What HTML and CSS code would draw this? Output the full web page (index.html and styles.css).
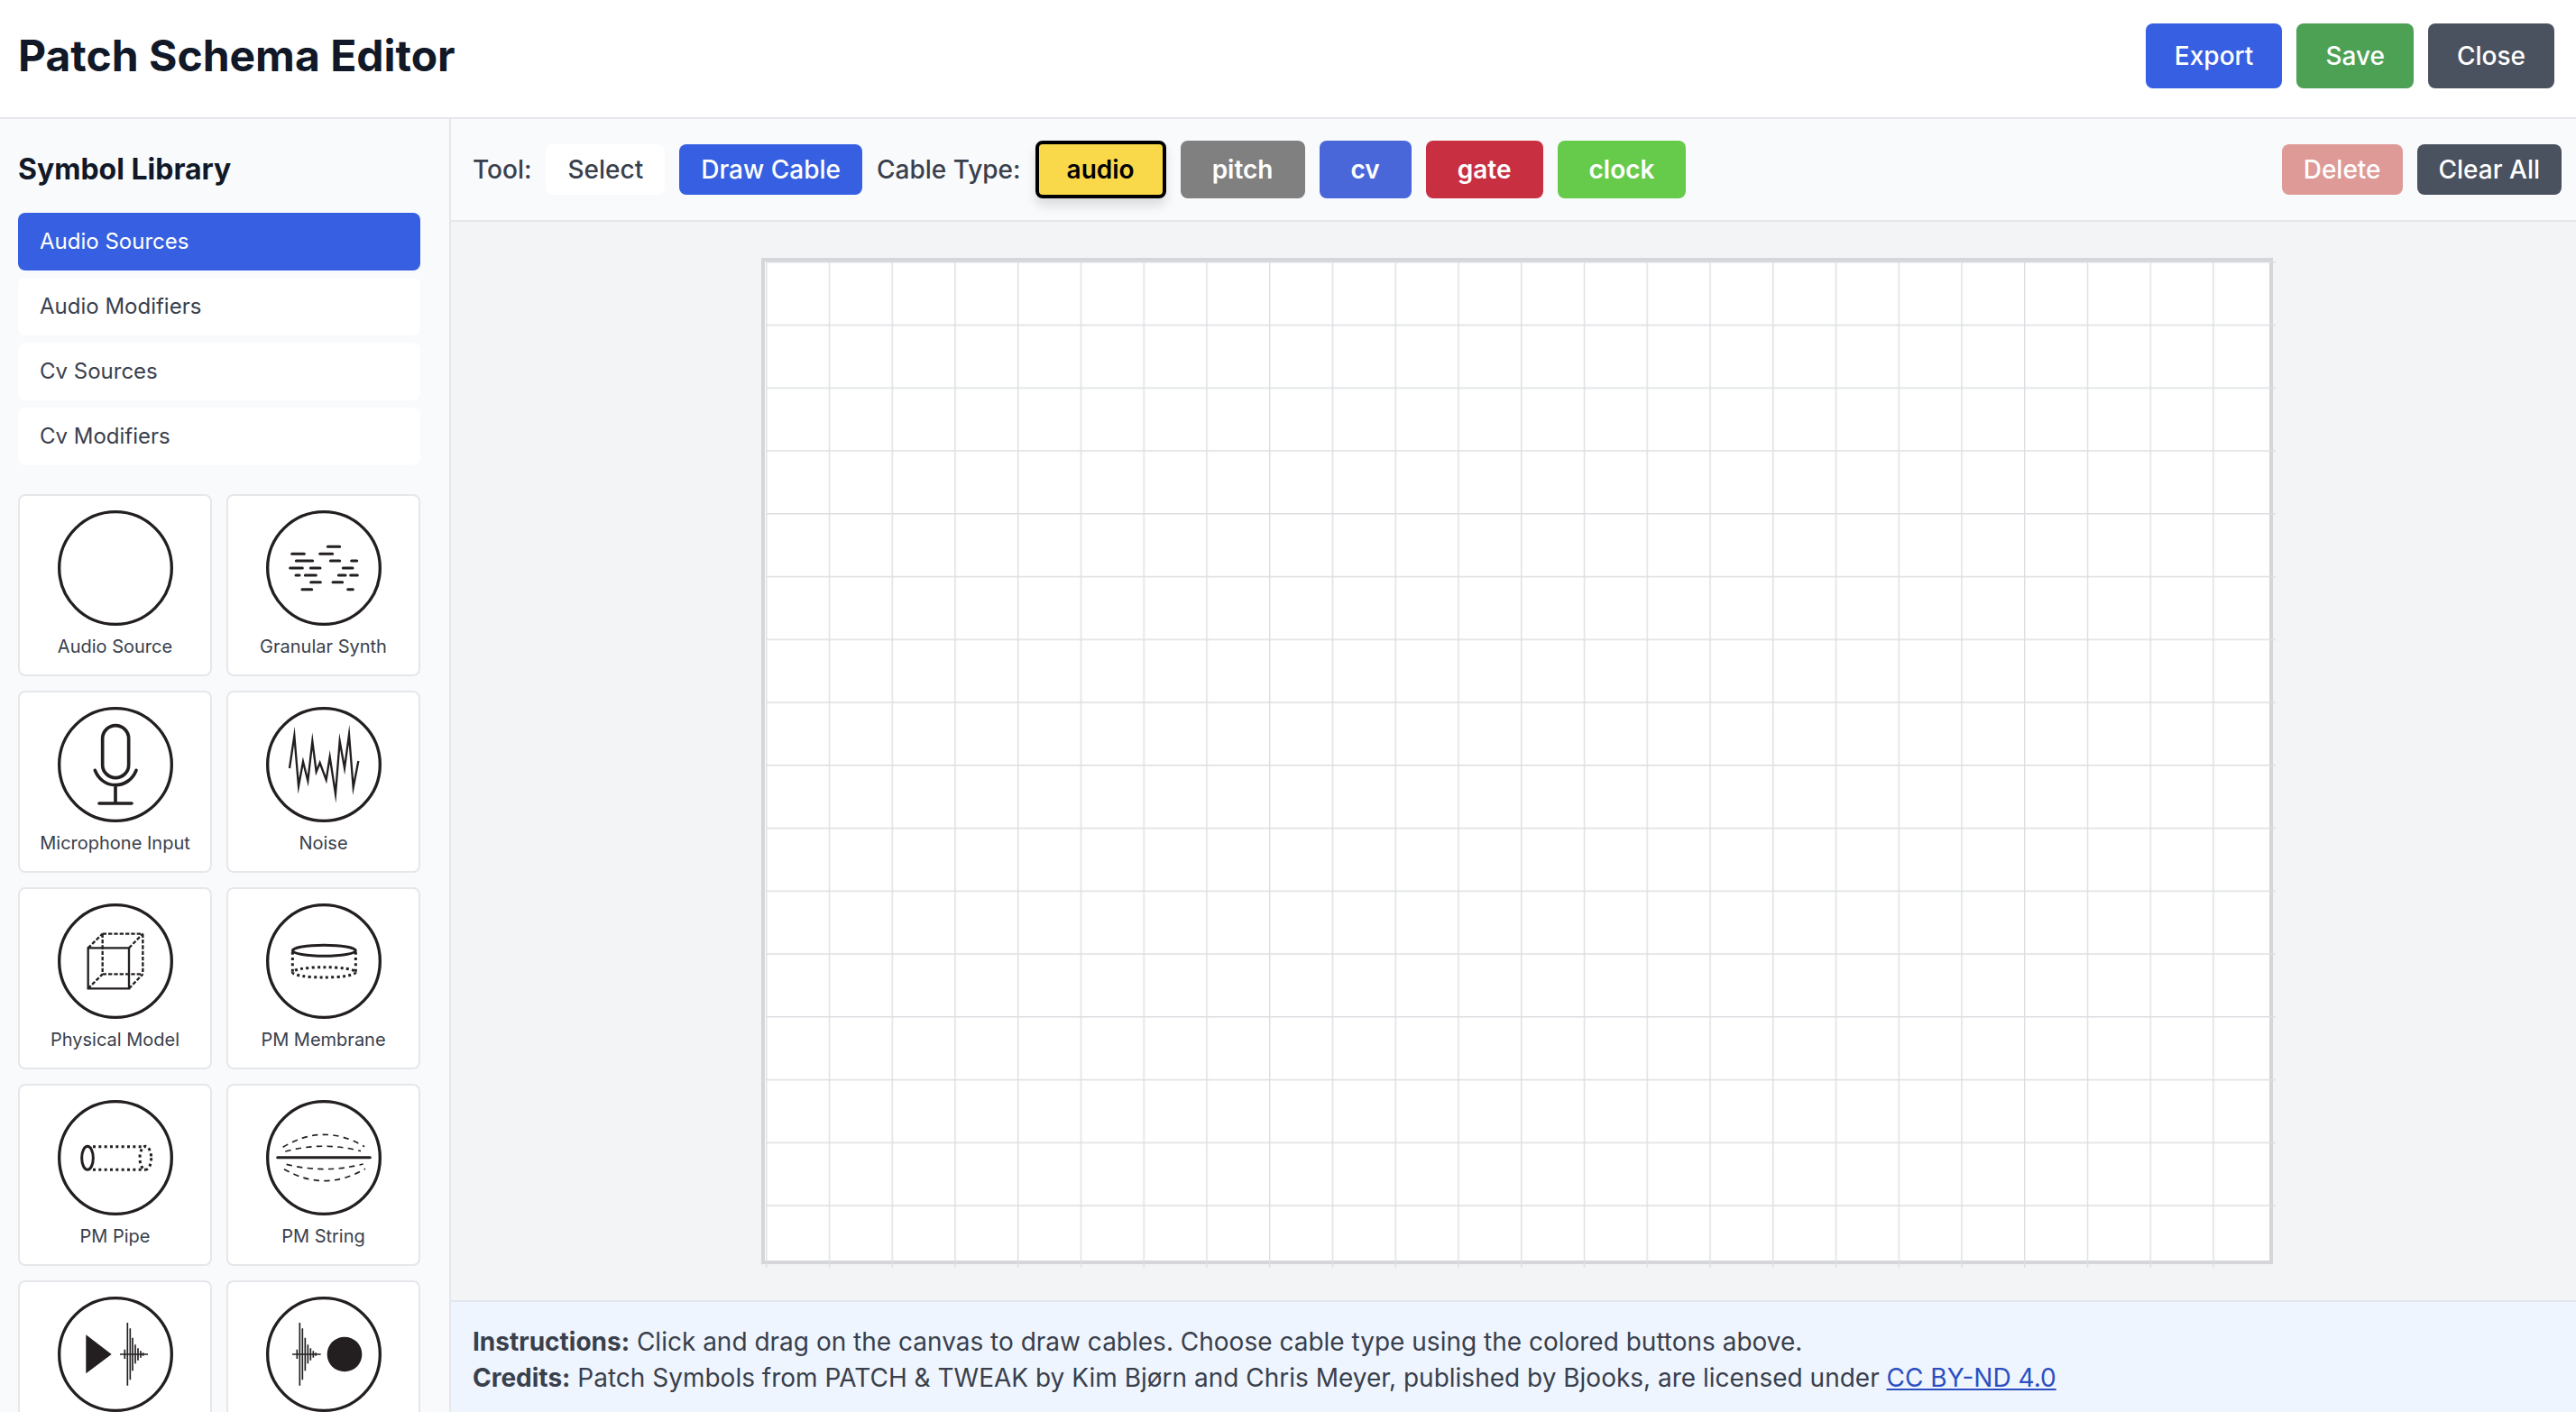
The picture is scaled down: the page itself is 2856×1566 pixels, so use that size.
FILE: index.html
```html
<!DOCTYPE html>
<html lang="en">
<head>
<meta charset="utf-8">
<title>Patch Schema Editor</title>
<link rel="stylesheet" href="styles.css">
</head>
<body>
<header class="header">
  <h1 class="title">Patch Schema Editor</h1>
  <div class="header-actions">
    <button class="btn btn-large btn-primary" type="button">Export</button>
    <button class="btn btn-large btn-success" type="button">Save</button>
    <button class="btn btn-large btn-dark" type="button">Close</button>
  </div>
</header>
<div class="workspace">
  <aside class="sidebar">
    <h2 class="sidebar-title">Symbol Library</h2>
    <nav class="categories">
      <button class="category category-active" type="button">Audio Sources</button>
      <button class="category" type="button">Audio Modifiers</button>
      <button class="category" type="button">Cv Sources</button>
      <button class="category" type="button">Cv Modifiers</button>
    </nav>
    <div class="symbols">
      <button class="card" type="button">
        <svg class="symbol" viewBox="0 0 384 384"><circle class="ring" cx="192" cy="192" r="187"/></svg>
        <span class="card-label">Audio Source</span>
      </button>
      <button class="card" type="button">
        <svg class="symbol" viewBox="0 0 384 384"><circle class="ring" cx="192" cy="192" r="187"/>
          <path class="round" d="M205 121H245M86 145H127M179 145H221M100 168H155M214 168H245M284 168H302M80 192H121M148 192H180M256 192H288M99 216H111M130 216H166M241 216H264M281 216H304M149 239H181M222 239H254M120 263H152M272 263H289"/></svg>
        <span class="card-label">Granular Synth</span>
      </button>
      <button class="card" type="button">
        <svg class="symbol" viewBox="0 0 384 384"><circle class="ring" cx="192" cy="192" r="187"/>
          <rect class="mic" x="149" y="62" width="87" height="174" rx="43.5"/>
          <path class="mic" d="M124 211C136 242 162 260 192 260S249 242 261 211M192 260V321M138 321H246"/></svg>
        <span class="card-label">Microphone Input</span>
      </button>
      <button class="card" type="button">
        <svg class="symbol" viewBox="0 0 384 384"><circle class="ring" cx="192" cy="192" r="187"/>
          <path class="noise" d="M78 204L94 96L108 264L123 182L139 246L154 114L167 216L179 186L200 243L212 166L231 290L245 114L261 204L276 92L290 268L307 180"/></svg>
        <span class="card-label">Noise</span>
      </button>
      <button class="card" type="button">
        <svg class="symbol" viewBox="0 0 384 384"><circle class="ring" cx="192" cy="192" r="187"/>
          <path class="edge" d="M101 148H237V283H101Z"/>
          <path class="edge dashed" d="M149 101H283M283 101V235M149 101V235M149 235H283M101 148L149 101M237 148L283 101M101 283L149 235M237 283L283 235"/></svg>
        <span class="card-label">Physical Model</span>
      </button>
      <button class="card" type="button">
        <svg class="symbol" viewBox="0 0 384 384"><circle class="ring" cx="192" cy="192" r="187"/>
          <ellipse class="round" cx="193" cy="157" rx="105" ry="18"/>
          <ellipse class="dotted" cx="193" cy="229" rx="105" ry="17"/>
          <path class="dotted" d="M88 161V229M298 161V229"/></svg>
        <span class="card-label">PM Membrane</span>
      </button>
      <button class="card" type="button">
        <svg class="symbol" viewBox="0 0 384 384"><circle class="ring" cx="192" cy="192" r="187"/>
          <ellipse class="round" cx="99" cy="193" rx="19" ry="39"/>
          <ellipse class="dotted" cx="292" cy="193" rx="19" ry="39"/>
          <path class="dotted" d="M117 155H292M117 232H292"/></svg>
        <span class="card-label">PM Pipe</span>
      </button>
      <button class="card" type="button">
        <svg class="symbol" viewBox="0 0 384 384"><circle class="ring" cx="192" cy="192" r="187"/>
          <path class="round" d="M38 191H346"/>
          <path class="vibration" d="M56 157Q192 74 327 155M64 171Q190 137 315 170M68 214Q194 246 323 213M60 230Q194 308 330 229"/></svg>
        <span class="card-label">PM String</span>
      </button>
      <button class="card" type="button">
        <svg class="symbol" viewBox="0 0 384 384"><circle class="ring" cx="192" cy="192" r="187"/>
          <path class="solid" d="M94 127L179 192L94 256Z"/>
          <path class="wave" d="M207 192H300M223 176V207M232 87V296M241 106V277M249 137V247M258 160V223M267 172V212M276 181V203M284 187V197"/></svg>
      </button>
      <button class="card" type="button">
        <svg class="symbol" viewBox="0 0 384 384"><circle class="ring" cx="192" cy="192" r="187"/>
          <circle class="solid" cx="261" cy="192" r="58"/>
          <path class="wave" d="M87 192H182M103 176V207M112 87V296M121 106V277M130 137V247M139 160V223M148 172V212M157 181V203M165 187V197"/></svg>
      </button>
    </div>
  </aside>
  <main class="editor">
    <div class="toolbar">
      <span class="toolbar-label">Tool:</span>
      <button class="btn btn-plain" type="button">Select</button>
      <button class="btn btn-primary" type="button">Draw Cable</button>
      <span class="toolbar-label">Cable Type:</span>
      <button class="btn cable cable-audio cable-active" type="button">audio</button>
      <button class="btn cable cable-pitch" type="button">pitch</button>
      <button class="btn cable cable-cv" type="button">cv</button>
      <button class="btn cable cable-gate" type="button">gate</button>
      <button class="btn cable cable-clock" type="button">clock</button>
      <div class="toolbar-actions">
        <button class="btn btn-danger" type="button" disabled>Delete</button>
        <button class="btn btn-dark" type="button">Clear All</button>
      </div>
    </div>
    <section class="stage">
      <div class="canvas">
        <svg class="grid" viewBox="0 0 1200 800">
          <defs>
            <pattern id="cell" width="50" height="50" patternUnits="userSpaceOnUse">
              <path class="grid-line" d="M50 0H0V50"/>
            </pattern>
          </defs>
          <rect width="1200" height="800" fill="url(#cell)"/>
        </svg>
      </div>
    </section>
    <footer class="notes">
      <p><strong>Instructions:</strong> Click and drag on the canvas to draw cables. Choose cable type using the colored buttons above.</p>
      <p><strong>Credits:</strong> Patch Symbols from PATCH &amp; TWEAK by Kim Bjørn and Chris Meyer, published by Bjooks, are licensed under <a href="https://creativecommons.org/licenses/by-nd/4.0/">CC BY-ND 4.0</a></p>
    </footer>
  </main>
</div>
</body>
</html>
```
FILE: styles.css
```css
* {
  box-sizing: border-box;
}

body {
  margin: 0;
  height: 100vh;
  display: flex;
  flex-direction: column;
  overflow: hidden;
  background: #ffffff;
  color: #39404c;
  font-family: Inter, "Liberation Sans", sans-serif;
  font-size: 28px;
  line-height: 40px;
}

h1, h2, p {
  margin: 0;
}

button {
  font: inherit;
  color: inherit;
  border: 0;
  cursor: pointer;
}

/* Header */
.header {
  display: flex;
  align-items: center;
  justify-content: space-between;
  padding: 26px 24px 32px 20px;
  border-bottom: 2px solid #e5e7eb;
}

.title {
  font-size: 48px;
  line-height: 64px;
  font-weight: 700;
  color: #111827;
}

.header-actions,
.toolbar-actions {
  display: flex;
  gap: 16px;
}

/* Buttons */
.btn {
  padding: 8px 24px;
  border-radius: 8px;
  font-weight: 500;
  color: #ffffff;
  white-space: nowrap;
}

.btn-large {
  padding: 16px 32px;
}

.btn-primary {
  background: #3660e1;
}

.btn-success {
  background: #4ca154;
}

.btn-dark {
  background: #4b525f;
}

.btn-danger {
  background: #de9a97;
}

.btn-plain {
  background: #ffffff;
  color: #39404c;
}

/* Layout */
.workspace {
  flex: 1;
  display: flex;
  min-height: 0;
}

.sidebar {
  flex: none;
  width: 500px;
  padding: 32px 32px 32px 20px;
  overflow-y: auto;
  scrollbar-width: none;
  background: #f9fafc;
  border-right: 2px solid #e5e7eb;
}

.sidebar-title {
  margin-bottom: 24px;
  font-size: 32px;
  line-height: 48px;
  font-weight: 700;
  color: #111827;
}

.categories {
  display: flex;
  flex-direction: column;
  gap: 8px;
  margin-bottom: 32px;
}

.category {
  padding: 16px 24px;
  border-radius: 8px;
  background: #ffffff;
  font-size: 24px;
  line-height: 32px;
  text-align: left;
}

.category-active {
  background: #3660e1;
  color: #ffffff;
}

.symbols {
  display: grid;
  grid-template-columns: 1fr 1fr;
  gap: 16px;
}

.card {
  display: flex;
  flex-direction: column;
  align-items: center;
  gap: 8px;
  padding: 16px 8px;
  background: #ffffff;
  border: 2px solid #e5e7eb;
  border-radius: 8px;
}

.card-label {
  font-size: 20px;
  line-height: 30px;
  white-space: nowrap;
}

/* Symbol drawings */
.symbol {
  width: 128px;
  height: 128px;
  fill: none;
  stroke: #231f20;
  stroke-width: 9;
}

.ring {
  stroke-width: 10;
}

.round {
  stroke-linecap: round;
}

.mic {
  stroke-width: 11;
  stroke-linecap: round;
}

.noise {
  stroke-width: 7;
  stroke-miterlimit: 20;
}

.edge {
  stroke-width: 7;
}

.dashed {
  stroke-dasharray: 13 6;
}

.dotted {
  stroke-dasharray: 9 10;
}

.vibration {
  stroke-width: 5;
  stroke-dasharray: 19 16;
}

.wave {
  stroke-width: 5;
}

.solid {
  fill: #231f20;
  stroke: none;
}

/* Editor */
.editor {
  flex: 1;
  display: flex;
  flex-direction: column;
  min-width: 0;
}

.toolbar {
  display: flex;
  align-items: center;
  gap: 16px;
  padding: 24px 16px 24px 24px;
  background: #f9fafc;
  border-bottom: 2px solid #e5e7eb;
}

.toolbar-label {
  font-weight: 500;
}

.toolbar-actions {
  margin-left: auto;
}

.cable {
  padding: 8px 31px;
  border: 4px solid transparent;
  font-weight: 600;
}

.cable-audio {
  background-color: #f9d949;
  color: #000000;
}

.cable-pitch {
  background-color: #808080;
}

.cable-cv {
  background-color: #4a67da;
}

.cable-gate {
  background-color: #c82f41;
}

.cable-clock {
  background-color: #66ca4b;
}

.cable-active {
  border-color: #000000;
  box-shadow: 0 8px 12px rgba(0, 0, 0, 0.12);
}

.stage {
  flex: 1;
  display: flex;
  justify-content: center;
  min-height: 0;
  padding: 40px 32px 40px 40px;
  background: #f3f4f6;
}

.canvas {
  position: relative;
  height: 100%;
  aspect-ratio: 419 / 279;
  background: #ffffff;
  border: 4px solid #d4d6d9;
}

.grid {
  position: absolute;
  top: 0;
  left: 0;
  width: calc(100% + 8px);
  height: calc(100% + 8px);
}

.grid-line {
  fill: none;
  stroke: #dcdee1;
  stroke-width: 2;
}

.notes {
  padding: 24px 24px 18px;
  background: #eff5fe;
  border-top: 2px solid #e2e7ee;
}

.notes strong {
  font-weight: 700;
}

.notes a {
  color: #2b4fc0;
  text-decoration: underline;
}
```
